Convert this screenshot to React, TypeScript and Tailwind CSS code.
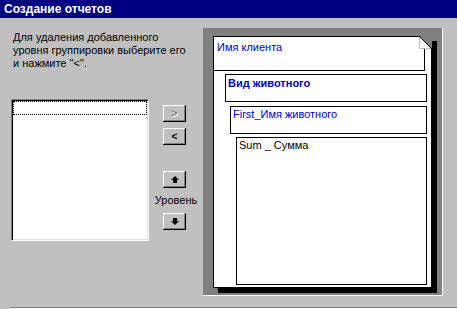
import React from "react";

const raised =
  "shadow-[inset_-1px_-1px_#000,inset_1px_1px_#fff,inset_-2px_-2px_#808080]";

function Btn({ children }: { children: React.ReactNode }) {
  return (
    <div
      className={`w-[23px] h-[17px] bg-[#c0c0c0] flex items-center justify-center ${raised}`}
    >
      {children}
    </div>
  );
}

export default function App() {
  return (
    <div
      className="w-[457px] h-[309px] bg-[#c0c0c0] flex flex-col overflow-hidden text-black"
      style={{ fontFamily: '"Liberation Sans", Arial, sans-serif' }}
    >
      <div className="h-[18px] bg-[#000080] text-white font-bold text-[12px] leading-[19px] pl-[4px]">
        Создание отчетов
      </div>
      <div className="flex h-[289px]">
        {/* left column */}
        <div className="w-[152px] pl-[11px] pt-[13px] flex flex-col">
          <div className="pl-[2px] text-[11px] leading-[13px] whitespace-nowrap">
            <div>Для удаления добавленного</div>
            <div>уровня группировки выберите его</div>
            <div>и нажмите "&lt;".</div>
          </div>
          <div className="mt-[29px] w-[138px] h-[142px] bg-white border-t border-l border-[#808080] border-r border-b border-r-white border-b-white shadow-[inset_1px_1px_#000,inset_-1px_-1px_#dfdfdf] p-[1px]">
            <div className="h-[14px] border border-dotted border-black" />
          </div>
        </div>
        {/* buttons column */}
        <div className="w-[51px] pl-[11px] pt-[87px] flex flex-col">
          <Btn>
            <span className="text-[10px] font-bold leading-none text-[#808080] [text-shadow:1px_1px_#fff]">
              &gt;
            </span>
          </Btn>
          <div className="h-[6px]" />
          <Btn>
            <span className="text-[10px] font-bold leading-none">&lt;</span>
          </Btn>
          <div className="h-[26px]" />
          <Btn>
            <svg width="8" height="7" viewBox="0 0 8 7">
              <polygon points="4,0 8,4 6,4 6,7 2,7 2,4 0,4" fill="#000" />
            </svg>
          </Btn>
          <div className="w-[23px] h-[25px] flex items-center justify-center">
            <span className="text-[11px] leading-none whitespace-nowrap ml-[3px]">
              Уровень
            </span>
          </div>
          <Btn>
            <svg width="8" height="7" viewBox="0 0 8 7">
              <polygon points="2,0 6,0 6,3 8,3 4,7 0,3 2,3" fill="#000" />
            </svg>
          </Btn>
        </div>
        {/* right preview panel */}
        <div className="mt-[10px] w-[240px] h-[268px] bg-[#808080] border-r border-b border-white pl-[10px] pt-[8px]">
          <div className="relative w-[219px] h-[252px] bg-white border border-black shadow-[5px_5px_0_#000] text-[11px] leading-[13px]">
            <div className="w-[211px] h-[34px] border-r border-b border-black pl-[3px] pt-[4px] text-[#0000c0]">
              Имя клиента
            </div>
            <div className="ml-[11px] mt-[3px] w-[202px] h-[28px] border border-black pl-[2px] pt-[2px] font-bold text-[#0000c0]">
              Вид животного
            </div>
            <div className="ml-[16px] mt-[4px] w-[197px] h-[28px] border border-black pl-[2px] pt-[1px] text-[#0000c0]">
              First_Имя животного
            </div>
            <div className="ml-[22px] mt-[3px] w-[191px] h-[148px] border border-black pl-[2px] pt-[1px]">
              Sum _ Сумма
            </div>
            <svg
              className="absolute top-[-1px] right-[-1px]"
              width="13"
              height="13"
              viewBox="0 0 13 13"
            >
              <polygon points="0,0 13,0 13,13" fill="#808080" />
              <polygon points="0.5,0.5 12.5,12.5 0.5,12.5" fill="#fff" stroke="#c0c0c0" strokeWidth="1" />
              <line x1="0" y1="0" x2="13" y2="13" stroke="#000" strokeWidth="1" />
            </svg>
          </div>
        </div>
      </div>
      <div className="ml-[10px] h-[1px] bg-[#808080]" />
      <div className="ml-[10px] h-[1px] bg-white" />
    </div>
  );
}
